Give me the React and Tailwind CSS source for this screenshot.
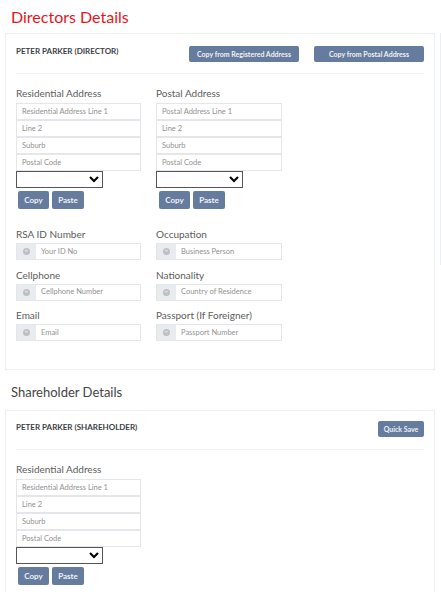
const FONT = "font-['Lato','Open_Sans',sans-serif]";

function Btn({ children, className = "" }) {
  return (
    <button className={"h-[16px] rounded-[2px] bg-[#667c9e] text-[7px] font-bold leading-none text-[#eef1f5] " + className}>
      {children}
    </button>
  );
}

function Label({ children, className = "" }) {
  return <div className={"text-[10px] leading-[14px] text-[#5c5c5c] " + className}>{children}</div>;
}

function AddressField({ placeholder, width }) {
  return (
    <input
      placeholder={placeholder}
      className={"block h-[17px] border border-[#e4e6e9] bg-white px-[5px] text-[7.5px] outline-none placeholder:text-[#929292] " + width}
    />
  );
}

function AddressBlock({ title, first, width, btnOffset }) {
  return (
    <div>
      <Label className="mb-[3px]">{title}</Label>
      <div className="flex flex-col">
        <AddressField placeholder={first} width={width} />
        <AddressField placeholder="Line 2" width={width} />
        <AddressField placeholder="Suburb" width={width} />
        <AddressField placeholder="Postal Code" width={width} />
      </div>
      <select className="block h-[17px] w-[87px] border border-[#555] bg-white text-[8px]" aria-label={title}>
        <option></option>
      </select>
      <div className={"mt-[3px] flex gap-[3px] " + btnOffset}>
        <Btn className="h-[18px] w-[31px] text-[8px]">Copy</Btn>
        <Btn className="h-[18px] w-[32px] text-[8px]">Paste</Btn>
      </div>
    </div>
  );
}

function Globe() {
  return (
    <svg viewBox="0 0 10 10" className="h-[7px] w-[7px]">
      <circle cx="5" cy="5" r="5" fill="#bcc0c4" />
      <path d="M2 3.5 L5 2 L7.5 3.5 L6 5.5 L3.5 5 Z" fill="#d9dbde" />
    </svg>
  );
}

function IconField({ label, placeholder }) {
  return (
    <div>
      <Label className="mb-[2px]">{label}</Label>
      <div className="flex h-[17px] border border-[#e4e6e9] bg-white">
        <span className="flex w-[19px] shrink-0 items-center justify-center bg-[#e9ecef]">
          <Globe />
        </span>
        <input
          placeholder={placeholder}
          className="min-w-0 flex-1 bg-white pl-[5px] text-[7.5px] outline-none placeholder:text-[#929292]"
        />
      </div>
    </div>
  );
}

export default function App() {
  return (
    <div className={"h-[592px] w-[441px] overflow-hidden bg-white " + FONT}>
      <div className="flex gap-[5px] pl-[5px]">
        <div className="w-[430px] shrink-0">
          <h1 className="flex h-[33px] items-center pl-[6px] text-[16px] font-normal text-[#e8141c]">Directors Details</h1>

          <section className="h-[337px] border border-[#eceff2] px-[10px]">
            <div className="flex h-[39px] items-start justify-between">
              <div className="mt-[12px] text-[8px] font-bold leading-[10px] text-[#3a3f45]">PETER PARKER (DIRECTOR)</div>
              <div className="mt-[12px] flex gap-[15px]">
                <Btn className="w-[110px]">Copy from Registered Address</Btn>
                <Btn className="w-[110px]">Copy from Postal Address</Btn>
              </div>
            </div>
            <hr className="border-[#eceff2]" />

            <div className="mt-[12px] flex gap-[15px]">
              <AddressBlock title="Residential Address" first="Residential Address Line 1" width="w-[125px]" btnOffset="ml-[2px]" />
              <AddressBlock title="Postal Address" first="Postal Address Line 1" width="w-[126px]" btnOffset="ml-[3px]" />
            </div>

            <div className="mt-[18px] grid w-[266px] grid-cols-[125px_126px] gap-x-[15px] gap-y-[7.5px]">
              <IconField label="RSA ID Number" placeholder="Your ID No" />
              <IconField label="Occupation" placeholder="Business Person" />
              <IconField label="Cellphone" placeholder="Cellphone Number" />
              <IconField label="Nationality" placeholder="Country of Residence" />
              <IconField label="Email" placeholder="Email" />
              <IconField label="Passport (If Foreigner)" placeholder="Passport Number" />
            </div>
          </section>

          <h2 className="flex h-[40px] items-center pl-[6px] pt-[5px] text-[13px] font-normal text-[#444]">Shareholder Details</h2>

          <section className="border border-[#eceff2] px-[10px]">
            <div className="flex h-[38px] items-start justify-between">
              <div className="mt-[11px] text-[8px] font-bold leading-[10px] text-[#3a3f45]">PETER PARKER (SHAREHOLDER)</div>
              <Btn className="mt-[10px] w-[46px]">Quick Save</Btn>
            </div>
            <hr className="border-[#eceff2]" />
            <div className="mt-[12px]">
              <AddressBlock title="Residential Address" first="Residential Address Line 1" width="w-[125px]" btnOffset="ml-[2px]" />
            </div>
            <div className="h-[20px]" />
          </section>
        </div>
        <div className="mt-[33px] h-[232px] w-[1px] bg-[#eceff2]" />
      </div>
    </div>
  );
}
